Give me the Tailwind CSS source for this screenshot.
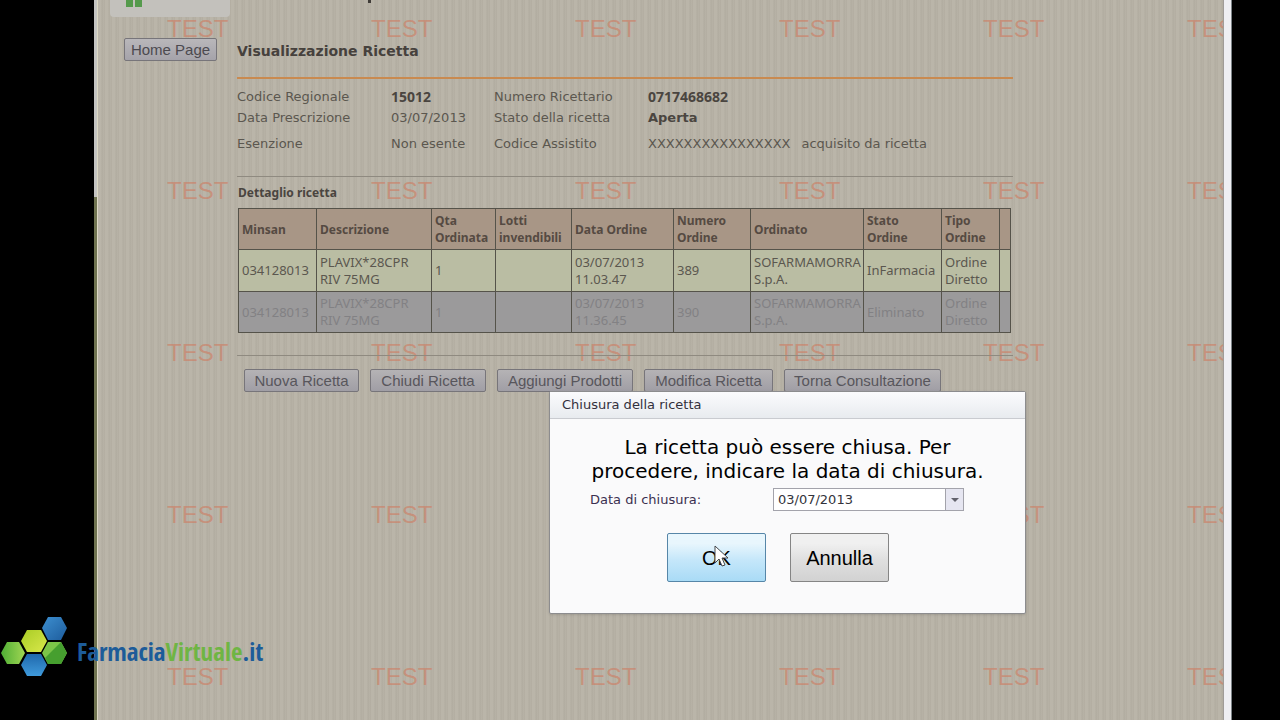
<!DOCTYPE html>
<html lang="it">
<head>
  <meta charset="UTF-8" />
  <title>Visualizzazione Ricetta | FarmaciaVirtuale.it</title>
  <meta name="viewport" content="width=device-width, initial-scale=1" />
  <script src="https://cdn.jsdelivr.net/npm/@tailwindcss/browser@4"></script>
</head>
<body class="bg-black font-['DejaVu_Sans',sans-serif] text-[#5b574f]">
  <div class="relative flex min-h-screen overflow-hidden pl-[94px] pr-12">

    <!-- Window frame, left -->
    <div class="flex w-1 shrink-0 flex-col border-r border-[#dcd8c4]">
      <div class="h-[197px] bg-[#c4c4c2]"></div>
      <div class="grow bg-[#6f7350]"></div>
    </div>

    <!-- Page -->
    <div class="relative grow overflow-hidden bg-[#b6b1a5] bg-[repeating-linear-gradient(90deg,#bab5a9_0px,#bab5a9_3px,#b1aca0_4px,#b8b3a7_6px,#b0aa9e_7px)]">

      <!-- Watermark -->
      <div id="watermark" aria-hidden="true" class="absolute left-[69px] top-[13px] font-['Liberation_Sans',Arial,sans-serif] text-2xl text-[#cf7b60]/60"></div>

      <div class="relative flex items-start">
        <aside class="w-[139px] shrink-0 pl-3">
          <div class="h-[17px] w-[120px] rounded-b bg-[#c3c1bc] pl-4">
            <svg class="h-2 w-4" viewBox="0 0 16 8"><path d="M0 0h7v7H0zM9 0h7v7H9z" fill="#559a4c" /></svg>
          </div>
          <button class="ml-[14px] mt-[21px] h-[23px] w-[93px] rounded-xs border border-[#77757a] bg-linear-to-b from-[#b9b7ba] to-[#a5a3aa] font-['Liberation_Sans',Arial,sans-serif] text-[15px] leading-[20px] text-[#4c4a50]">Home Page</button>
        </aside>

        <main class="w-[776px]">
          <div class="h-10 pl-[130px]">
            <svg class="h-2 w-2" viewBox="0 0 8 8"><path d="M1 0h3v3H1z" fill="#403c38" /></svg>
          </div>
          <h1 class="h-[39px] border-b-2 border-[#c98a50] text-sm font-bold leading-[22px] text-[#46413d]">Visualizzazione Ricetta</h1>
          <dl class="grid grid-cols-[154px_103px_154px_1fr] pt-[7px] text-[13px] leading-[21px]">
            <dt>Codice Regionale</dt><dd class="font-['Noto_Sans',sans-serif] text-sm font-bold leading-[21px] text-[#4a4540]">15012</dd>
            <dt>Numero Ricettario</dt><dd class="font-['Noto_Sans',sans-serif] text-sm font-bold leading-[21px] text-[#4a4540]">0717468682</dd>
            <dt>Data Prescrizione</dt><dd>03/07/2013</dd>
            <dt>Stato della ricetta</dt><dd class="font-bold text-[#4a4540]">Aperta</dd>
            <dt class="pt-[5px]">Esenzione</dt><dd class="pt-[5px]">Non esente</dd>
            <dt class="pt-[5px]">Codice Assistito</dt><dd class="flex gap-[11px] pt-[5px]"><span>XXXXXXXXXXXXXXXX</span><span>acquisito da ricetta</span></dd>
          </dl>

          <section class="mt-[22px] border-y border-[#8f8a80] pb-[22px] pl-px pt-2 font-['Noto_Sans',sans-serif] text-[13px]">
            <h2 class="h-[23px] text-xs font-bold leading-[16px] text-[#4a4540]">Dettaglio ricetta</h2>
            <table class="w-[773px] table-fixed border-collapse text-left leading-[17px] [&_td]:border [&_td]:border-[#55534a] [&_td]:pl-[3px] [&_th]:border [&_th]:border-[#55534a] [&_th]:pl-[3px] [&_th]:text-xs [&_th]:leading-[17px]">
              <colgroup>
                <col class="w-[78px]" /><col class="w-[115px]" /><col class="w-[64px]" /><col class="w-[76px]" /><col class="w-[102px]" />
                <col class="w-[77px]" /><col class="w-[113px]" /><col class="w-[78px]" /><col class="w-[58px]" /><col class="w-[11px]" />
              </colgroup>
              <thead class="bg-[#a89686] text-[#554a42]">
                <tr class="h-[41px]">
                  <th>Minsan</th><th>Descrizione</th><th>Qta<br />Ordinata</th><th>Lotti<br />invendibili</th><th>Data Ordine</th>
                  <th>Numero<br />Ordine</th><th>Ordinato</th><th>Stato<br />Ordine</th><th>Tipo<br />Ordine</th><th></th>
                </tr>
              </thead>
              <tbody>
                <tr class="h-[42px] bg-[#babda3]">
                  <td>034128013</td><td>PLAVIX*28CPR<br />RIV 75MG</td><td>1</td><td></td><td>03/07/2013<br />11.03.47</td>
                  <td>389</td><td>SOFARMAMORRA<br />S.p.A.</td><td>InFarmacia</td><td>Ordine<br />Diretto</td><td></td>
                </tr>
                <tr class="h-[41px] bg-[#9b9a9b] text-[#828184]">
                  <td>034128013</td><td>PLAVIX*28CPR<br />RIV 75MG</td><td>1</td><td></td><td>03/07/2013<br />11.36.45</td>
                  <td>390</td><td>SOFARMAMORRA<br />S.p.A.</td><td>Eliminato</td><td>Ordine<br />Diretto</td><td></td>
                </tr>
              </tbody>
            </table>
          </section>

          <div class="flex gap-[11px] pl-[7px] pt-[13px] font-['Liberation_Sans',Arial,sans-serif] text-[15px] leading-[20px] text-[#58565c] [&>button]:h-[23px] [&>button]:shrink-0 [&>button]:rounded-xs [&>button]:border [&>button]:border-[#77757a] [&>button]:bg-linear-to-b [&>button]:from-[#b5b3b5] [&>button]:to-[#a09ea5]">
            <button class="w-[115px]">Nuova Ricetta</button>
            <button class="w-[116px]">Chiudi Ricetta</button>
            <button class="w-[136px]">Aggiungi Prodotti</button>
            <button class="w-[129px]">Modifica Ricetta</button>
            <button class="w-[157px]">Torna Consultazione</button>
          </div>
        </main>
      </div>
    </div>

    <!-- Window frame, right -->
    <div class="w-[9px] shrink-0 border-x border-l-[#a09c98] border-r-[#7d8488] bg-[#efeff3]"></div>

    <!-- Dialog -->
    <div role="dialog" aria-labelledby="dialogTitle" class="absolute left-[549px] top-[391px] w-[477px] rounded-xs border border-[#8c8c8e] bg-[#fafafb] pb-[31px] text-black shadow-sm">
      <h2 id="dialogTitle" class="h-[27px] border-b border-[#c9cbd0] bg-linear-to-b from-[#fbfbfd] to-[#e8ebef] pl-3 text-[13px] leading-[26px] text-[#33303c]">Chiusura della ricetta</h2>
      <p class="mt-4 text-center text-xl leading-[24px]">La ricetta può essere chiusa. Per<br />procedere, indicare la data di chiusura.</p>
      <div class="mt-[5px] flex items-center pl-10 text-[13px] text-[#3a3050]">
        <label for="closeDate" class="w-[183px]">Data di chiusura:</label>
        <div class="flex h-[23px] w-[191px] border border-[#a3a3ab] bg-white">
          <input id="closeDate" type="text" value="03/07/2013" class="w-0 grow pl-1 text-[#33333b]" />
          <button aria-label="Apri calendario" class="flex w-[18px] items-center justify-center border-l border-[#a3a3ab] bg-[#e6e6f1]">
            <svg class="h-1 w-2" viewBox="0 0 8 4"><path d="M0 0h8L4 4z" fill="#62626c" /></svg>
          </button>
        </div>
      </div>
      <div class="mt-[22px] flex gap-6 pl-[117px] font-['Liberation_Sans',Arial,sans-serif] text-xl leading-[44px]">
        <button class="h-[49px] w-[99px] rounded-xs border border-[#5686a8] bg-linear-to-b from-[#e8f6fd] from-20% via-[#c5e7fa] via-55% to-[#a9dbf6]">OK</button>
        <button class="h-[49px] w-[99px] rounded-xs border border-[#858585] bg-linear-to-b from-[#f0f0f0] from-20% via-[#dfdfdf] via-55% to-[#d2d2d2]">Annulla</button>
      </div>
    </div>

    <!-- Mouse pointer -->
    <svg class="absolute left-[714px] top-[545px] h-[23px] w-[15px]" viewBox="0 0 15 23"><path d="M1 1v17l4-4 3 7 3-1-3-7h6z" fill="#fff" stroke="#44484c" /></svg>

    <!-- Logo -->
    <div class="absolute left-0 top-[616px] flex items-center gap-[7px]">
      <svg class="h-[62px] w-[70px]" viewBox="0 0 70 62">
        <defs>
          <linearGradient id="blue" x2="1" y2="1"><stop stop-color="#3d8fd0" /><stop offset="1" stop-color="#1d5c9c" /></linearGradient>
          <linearGradient id="sky" x2="0" y2="1"><stop stop-color="#1f68ac" /><stop offset="1" stop-color="#3f9adb" /></linearGradient>
          <linearGradient id="green"><stop stop-color="#4fae35" /><stop offset="1" stop-color="#a0d653" /></linearGradient>
          <linearGradient id="lime" x2="1" y2="1"><stop stop-color="#a9cc25" /><stop offset="1" stop-color="#d9e84b" /></linearGradient>
        </defs>
        <path d="M42 12l6-11h13l6 11-6 12H48z" fill="url(#blue)" />
        <path d="M1 37l6-11h12l6 11-6 11H7z" fill="url(#green)" />
        <path d="M42 37l6-11h13l6 11-6 11H48z" fill="#7cc548" />
        <path d="M61 26l6 11-6 11H48l-3-6z" fill="#469f2f" />
        <path d="M21 25l6-11h14l6 11-6 11H27z" fill="url(#lime)" />
        <path d="M21 49l6-11h14l6 11-6 11H27z" fill="url(#sky)" />
      </svg>
      <a href="#" class="mt-2 whitespace-nowrap font-['Open_Sans_Condensed','Liberation_Sans_Narrow',sans-serif] text-[25px] leading-[32px] text-[#1d5c99]">Farmacia<span class="text-[#6fb544]">Virtuale</span>.it</a>
    </div>
  </div>

  <script>
    // repeat the watermark over the whole page background
    const watermark = document.getElementById("watermark");
    for (let r = 0; r < 5; r++) {
      const row = document.createElement("div");
      row.className = "flex h-[162px]";
      for (let c = 0; c < 6; c++) {
        const mark = document.createElement("span");
        mark.className = "w-[204px] shrink-0";
        mark.textContent = "TEST";
        row.appendChild(mark);
      }
      watermark.appendChild(row);
    }
  </script>
</body>
</html>
